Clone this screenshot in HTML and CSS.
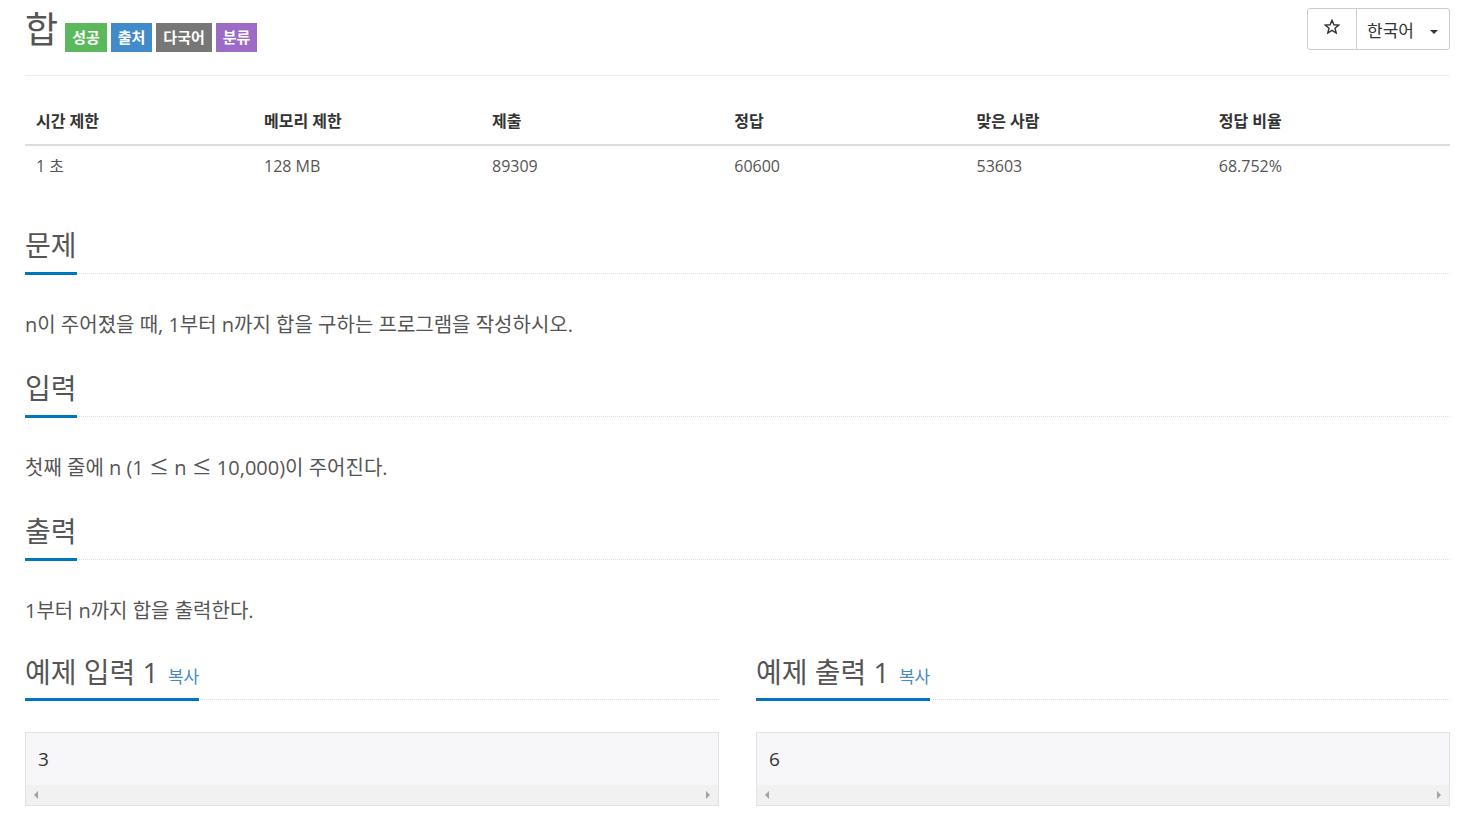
FILE: index.html
```html
<!DOCTYPE html>
<html>
<head>
	<meta charset="utf-8">
	<title>합</title>
	<link rel="stylesheet" href="styles.css">
</head>
<body>
<div class="container">
	<div class="page-header">
		<div class="title">
			<h1>합</h1>
			<span class="label label-success">성공</span>
			<span class="label label-primary">출처</span>
			<span class="label label-default">다국어</span>
			<span class="label label-purple">분류</span>
		</div>
		<div class="btn-group">
			<button class="btn btn-star">
				<svg width="16" height="16" viewBox="0 0 16 16"><path d="M8 1.2l1.9 4.6 4.9.3-3.8 3.1 1.2 4.8L8 11.4l-4.2 2.6L5 9.2 1.2 6.1l4.9-.3z" fill="none" stroke="#333" stroke-width="1.4" stroke-linejoin="miter"/></svg>
			</button>
			<button class="btn btn-lang">한국어 <i class="caret"></i></button>
		</div>
	</div>

	<table class="info">
		<thead>
			<tr>
				<th class="w16">시간 제한</th>
				<th class="w16">메모리 제한</th>
				<th class="w17">제출</th>
				<th class="w17">정답</th>
				<th class="w17">맞은 사람</th>
				<th class="w17">정답 비율</th>
			</tr>
		</thead>
		<tbody>
			<tr>
				<td>1 초 </td>
				<td>128 MB</td>
				<td>89309</td>
				<td>60600</td>
				<td>53603</td>
				<td>68.752%</td>
			</tr>
		</tbody>
	</table>

	<section class="problem-section">
		<div class="headline"><h2>문제</h2></div>
		<p class="problem-text">n이 주어졌을 때, 1부터 n까지 합을 구하는 프로그램을 작성하시오.</p>
	</section>
	<section class="problem-section">
		<div class="headline"><h2>입력</h2></div>
		<p class="problem-text">첫째 줄에 n (1 <span class="sym">≤</span> n <span class="sym">≤</span> 10,000)이 주어진다.</p>
	</section>
	<section class="problem-section">
		<div class="headline"><h2>출력</h2></div>
		<p class="problem-text">1부터 n까지 합을 출력한다.</p>
	</section>

	<div class="samples">
		<section class="sample">
			<div class="headline"><h2>예제 입력 1 <a href="#" class="copy">복사</a></h2></div>
			<div class="sampledata">
				<pre>3</pre>
				<div class="scrollbar"><i class="arrow-left"></i><i class="arrow-right"></i></div>
			</div>
		</section>
		<section class="sample">
			<div class="headline"><h2>예제 출력 1 <a href="#" class="copy">복사</a></h2></div>
			<div class="sampledata">
				<pre>6</pre>
				<div class="scrollbar"><i class="arrow-left"></i><i class="arrow-right"></i></div>
			</div>
		</section>
	</div>
</div>
</body>
</html>
```

FILE: styles.css
```css
* {
	margin: 0;
	padding: 0;
	box-sizing: border-box;
}
body {
	font-family: "Open Sans", "Noto Sans CJK KR", sans-serif;
	font-size: 16px;
	color: #555;
	background: #fff;
}
.container {
	padding: 0 32px 0 25px;
}
.page-header {
	display: flex;
	justify-content: space-between;
	align-items: flex-start;
	height: 76px;
	border-bottom: 1px solid #eee;
}
.title {
	display: flex;
	align-items: flex-start;
}
.title h1 {
	font-size: 36px;
	font-weight: 400;
	line-height: 36px;
	margin-top: 12px;
	margin-right: 7px;
	color: #555;
}
.label {
	display: inline-block;
	height: 29px;
	line-height: 29px;
	margin-top: 23px;
	margin-right: 4px;
	padding: 0 7px;
	font-size: 15px;
	font-weight: 700;
	color: #fff;
}
.label-success { background: #5cb85c; }
.label-primary { background: #428bca; }
.label-default { background: #777; }
.label-purple { background: #9b6bc6; }

.btn-group {
	display: flex;
	margin-top: 8px;
}
.btn {
	height: 42px;
	border: 1px solid #ccc;
	background: #fff;
	font-family: "Open Sans", "Noto Sans CJK KR", sans-serif;
	font-size: 17px;
	color: #333;
	cursor: pointer;
}
.btn-star {
	width: 50px;
	border-radius: 3px 0 0 3px;
	display: flex;
	align-items: center;
	justify-content: center;
	padding-bottom: 4px;
}
.btn-lang {
	width: 94px;
	margin-left: -1px;
	border-radius: 0 3px 3px 0;
	text-align: left;
	padding-left: 10px;
}
.caret {
	display: inline-block;
	width: 0;
	height: 0;
	margin-left: 12px;
	vertical-align: middle;
	border-top: 4px solid #333;
	border-left: 4px solid transparent;
	border-right: 4px solid transparent;
}

.info {
	width: 100%;
	margin-top: 24px;
	border-collapse: collapse;
}
.info th,
.info td {
	text-align: left;
	padding: 8px 11px;
	line-height: 26px;
}
.info th {
	font-weight: 700;
	color: #333;
	padding-bottom: 10px;
	border-bottom: 2px solid #ddd;
}
.info td {
	padding-top: 7px;
	padding-bottom: 7px;
}
.w16 { width: 16%; }
.w17 { width: 17%; }

.problem-section {
	margin-top: 41px;
}
.problem-section + .problem-section {
	margin-top: 30px;
}
.headline {
	border-bottom: 1px dotted #ddd;
}
.headline h2 {
	display: inline-block;
	font-size: 28px;
	font-weight: 400;
	line-height: 36px;
	padding-bottom: 9px;
	margin-bottom: -2px;
	border-bottom: 3px solid #0076c0;
	color: #555;
}
.problem-text {
	margin-top: 36px;
	font-size: 20px;
	line-height: 30px;
	height: 30px;
}
.sym {
	font-family: "Noto Sans CJK KR", sans-serif;
	line-height: 1;
}

.samples {
	display: grid;
	grid-template-columns: 1fr 1fr;
	gap: 37px;
	margin-top: 24px;
}
.sample .headline {
	padding-top: 4px;
}
.sample .headline h2 {
	padding-bottom: 3px;
}
.copy {
	font-size: 17px;
	color: #428bca;
	text-decoration: none;
	margin-left: 2px;
}
.sampledata {
	margin-top: 32px;
	border: 1px solid #e1e1e8;
	background: #f7f7f9;
}
.sampledata pre {
	font-family: "Open Sans", sans-serif;
	font-size: 19px;
	line-height: 26px;
	padding: 13px 12px 13px 12px;
	color: #333;
}
.scrollbar {
	height: 20px;
	background: #f1f1f1;
	display: flex;
	justify-content: space-between;
	align-items: center;
	padding: 0 8px;
}
.arrow-left,
.arrow-right {
	width: 0;
	height: 0;
	border-top: 4px solid transparent;
	border-bottom: 4px solid transparent;
}
.arrow-left {
	border-right: 4px solid #a3a3a3;
}
.arrow-right {
	border-left: 4px solid #a3a3a3;
}
```
